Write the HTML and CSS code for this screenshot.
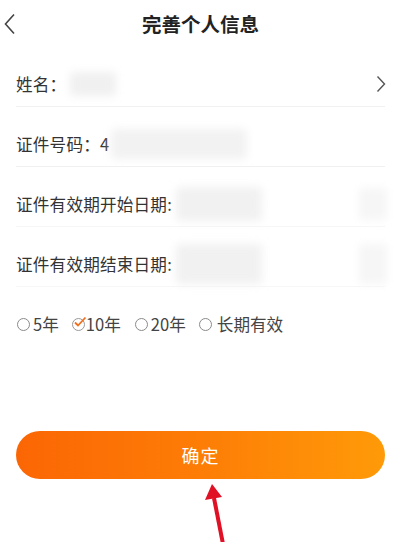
FILE: index.html
```html
<!DOCTYPE html>
<html lang="zh">
<head>
<meta charset="utf-8">
<link rel="stylesheet" href="styles.css">
</head>
<body>
<div class="page">
  <header class="header">
    <svg class="back" width="14" height="22" viewBox="0 0 14 22"><path d="M11 1.5 L2.5 11 L11 20.5" fill="none" stroke="#444" stroke-width="1.6"/></svg>
    <h1 class="title">完善个人信息</h1>
  </header>
  <div class="form">
    <div class="row">
      <span class="label">姓名：</span><span class="blob b1"></span>
      <svg class="arrow-r" width="10" height="18" viewBox="0 0 10 18"><path d="M1.5 1.5 L8.5 9 L1.5 16.5" fill="none" stroke="#555" stroke-width="1.4"/></svg>
    </div>
    <div class="row">
      <span class="label">证件号码：4</span><span class="blob b2"></span>
    </div>
    <div class="row faint">
      <span class="label">证件有效期开始日期:</span><span class="blob b3"></span><span class="blob bright"></span>
    </div>
    <div class="row faint">
      <span class="label">证件有效期结束日期:</span><span class="blob b4"></span><span class="blob bright tall"></span>
    </div>
    <div class="radios">
      <span class="opt"><span class="circle"></span>5年</span>
      <span class="opt"><span class="circle checked"><svg class="tick" width="15" height="13" viewBox="0 0 15 13"><path d="M3 6.5 L6 9.5 L13.5 1.5" fill="none" stroke="#f07020" stroke-width="1.8"/></svg></span>10年</span>
      <span class="opt"><span class="circle"></span>20年</span>
      <span class="opt"><span class="circle"></span>长期有效</span>
    </div>
    <button class="confirm">确定</button>
  </div>
  <svg class="pointer" width="30" height="60" viewBox="0 0 30 60"><path d="M19 60 L10 14" stroke="#e01025" stroke-width="4"/><path d="M8 0 L1 16 L18 13 Z" fill="#e01025"/></svg>
</div>
</body>
</html>
```
FILE: styles.css
```css
* { box-sizing: border-box; }
html, body { margin: 0; padding: 0; background: #fff; }
body { font-family: "Noto Sans CJK SC", "Noto Sans", sans-serif; color: #333; }
.page { position: relative; width: 401px; height: 542px; overflow: hidden; }
.header { height: 47px; display: flex; align-items: center; justify-content: center; position: relative; }
.back { position: absolute; left: 3px; top: 13px; }
.title { margin: 0; font-size: 19.5px; font-weight: 700; color: #222; line-height: 24px; }
.form { padding: 0 16px; }
.row { display: flex; align-items: center; height: 60px; padding-top: 26px; padding-bottom: 11px; border-bottom: 1px solid #f1f1f1; font-size: 16.6px; line-height: 22px; }
.row.faint { border-bottom-color: #f7f7f7; }
.label { white-space: nowrap; color: #333; letter-spacing: 0.2px; }
.blob { display: inline-block; background: #ececec; filter: blur(4px); border-radius: 4px; }
.b1 { width: 46px; height: 24px; margin-left: 4px; background: #f0f0f0; }
.b2 { width: 136px; height: 30px; margin-left: 2px; background: #f2f2f2; }
.b3 { width: 86px; height: 34px; margin-left: 4px; background: #f1f1f1; }
.b4 { width: 86px; height: 40px; margin-left: 4px; background: #f1f1f1; }
.bright { width: 28px; height: 32px; margin-left: auto; margin-right: -2px; background: #f6f6f6; }
.bright.tall { height: 40px; }
.arrow-r { margin-left: auto; margin-right: -1px; }
.radios { display: flex; align-items: center; margin-top: 26px; height: 22px; font-size: 16.6px; color: #444; padding-left: 1px; }
.opt { display: inline-flex; align-items: center; white-space: nowrap; }
.opt:nth-child(1) { margin-right: 13px; }
.opt:nth-child(2) { margin-right: 14px; }
.opt:nth-child(3) { margin-right: 13px; }
.circle { position: relative; flex: 0 0 13px; display: inline-block; width: 13px; height: 13px; border: 1.3px solid #8a8a8a; border-radius: 50%; margin-right: 3px; }
.opt:nth-child(4) .circle { margin-right: 5px; }
.circle.checked { border-color: #999; margin-right: 1px; }
.tick { position: absolute; left: -1px; top: -3px; }
.confirm { display: flex; align-items: center; justify-content: center; width: 100%; height: 48px; margin-top: 96px; border: none; border-radius: 24px; background: linear-gradient(90deg, #fb6604 0%, #fd7d06 50%, #ff9a08 100%); color: #fff; font-family: inherit; font-size: 18px; letter-spacing: 1px; }
.pointer { position: absolute; left: 204px; top: 484px; }
```
